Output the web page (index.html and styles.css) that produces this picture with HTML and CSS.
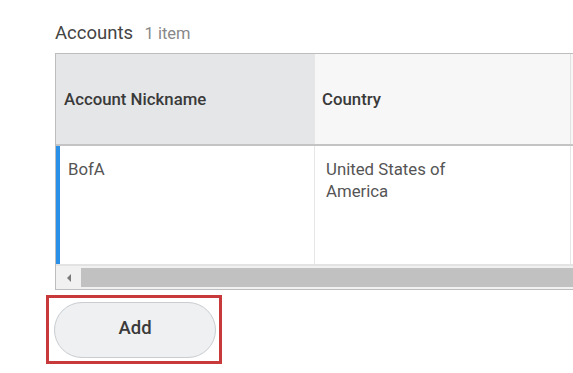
FILE: index.html
```
<!doctype html>
<html>
<head>
<meta charset="utf-8">
<title>Accounts</title>
<link rel="stylesheet" href="styles.css">
</head>
<body>

<div class="panel">
    <h2 class="title">Accounts <span class="count">1 item</span></h2>

    <div class="grid">
        <div class="row head">
            <div class="cell first">Account Nickname</div>
            <div class="cell second">Country</div>
            <div class="cell third"></div>
        </div>
        <div class="row body">
            <div class="cell first"><span class="mark"></span>BofA</div>
            <div class="cell second">United States of<br>America</div>
            <div class="cell third"></div>
        </div>
        <div class="scroll">
            <div class="arrow"><span></span></div>
            <div class="thumb"></div>
        </div>
    </div>

    <div class="actions">
        <button class="add">Add</button>
    </div>
</div>

</body>
</html>
```
FILE: styles.css
```
* { padding: 0; margin: 0; box-sizing: border-box; }

body {
	background: #fff;
	font-family: Roboto, "Liberation Sans", Arial, sans-serif;
	color: #333;
	overflow: hidden;
	width: 573px;
	height: 373px;
}

.panel {
	padding: 21px 0 0 55px;
}

.title {
	font-size: 18.5px;
	font-weight: normal;
	line-height: 24px;
	color: #444;
	margin-bottom: 7px;
}
.title .count {
	font-size: 16.5px;
	color: #888;
	margin-left: 7px;
}

.grid {
	width: 518px;
	border: 1px solid #bdbdbd;
	border-right: none;
}

.row {
	display: grid;
	grid-template-columns: 258px 256px 1fr;
}

.cell {
	font-size: 16.8px;
	padding-left: 8px;
}

.head {
	height: 92px;
	border-bottom: 2px solid #c4c4c4;
}
.head .cell {
	display: flex;
	align-items: center;
	font-weight: 500;
	color: #3a3a3a;
}
.head .first { background: #e4e6e8; }
.head .second { background: #f7f7f7; border-left: 1px solid #e6e6e6; padding-left: 7px; }
.head .third { background: #f7f7f7; border-left: 1px solid #e0e0e0; }

.body {
	height: 120px;
	border-bottom: 2px solid #e3e3e3;
}
.body .cell {
	color: #555;
	padding-top: 12px;
	line-height: 22px;
}
.body .first {
	position: relative;
	padding-left: 12px;
}
.body .first .mark {
	position: absolute;
	left: 0;
	top: 0;
	bottom: 0;
	width: 4px;
	background: #2a8fe6;
}
.body .second { border-left: 1px solid #e6e6e6; padding-left: 11px; }
.body .third { border-left: 1px solid #e6e6e6; }

.scroll {
	display: flex;
	height: 23px;
	background: #f1f1f1;
}
.scroll .arrow {
	width: 25px;
	display: flex;
	align-items: center;
	justify-content: center;
}
.scroll .arrow span {
	width: 0;
	height: 0;
	border-top: 4px solid transparent;
	border-bottom: 4px solid transparent;
	border-right: 4px solid #7a7a7a;
}
.scroll .thumb {
	flex: 1;
	background: #c1c1c1;
	margin: 2px 0 2px;
}

.actions {
	display: inline-block;
	margin: 5px 0 0 -9px;
	padding: 4px 3px 3px 5px;
	border: 3px solid #c8393c;
}

.add {
	display: block;
	width: 162px;
	height: 56px;
	padding-bottom: 4px;
	border: 1px solid #c9cdd0;
	border-radius: 28px;
	background: #eef0f2;
	font-family: Roboto, "Liberation Sans", Arial, sans-serif;
	font-size: 18.5px;
	font-weight: 500;
	color: #3a3a3a;
}
```
